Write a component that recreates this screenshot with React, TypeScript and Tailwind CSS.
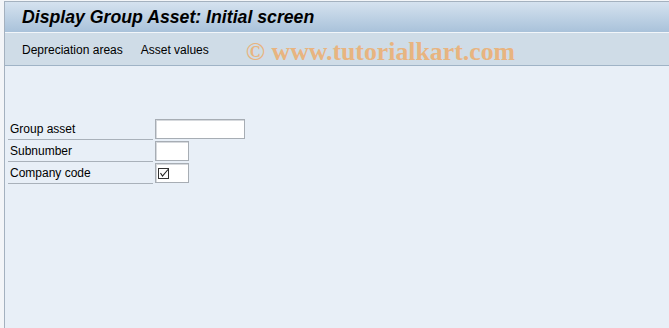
import React from 'react';

const Field = ({ label, width, children }: { label: string; width: string; children?: React.ReactNode }) => (
  <div className="flex items-end h-[22px]">
    <div className="w-[145px] h-[21px] border-b border-[#a9b1ba] pl-[2px] flex items-center text-[12px] text-black">
      {label}
    </div>
    <div
      className={`${width} h-[20px] ml-[2px] mb-[1px] bg-white border border-[#a7adb4] shadow-[inset_1px_1px_0_#d6d9dd] flex items-center`}
    >
      {children}
    </div>
  </div>
);

export default function App() {
  return (
    <div className="w-[669px] h-[328px] bg-[#f3f5f8] pl-[4px] pt-[1px] overflow-hidden font-['Liberation_Sans',Arial,sans-serif]">
      <div className="h-full border-l border-t border-[#a4b1bf] flex flex-col bg-[#e8eff7]">
        <div className="h-[31px] shrink-0 bg-gradient-to-b from-[#d5e2ef] to-[#a9c2da] border-b border-[#f2f6fa] flex items-center pl-[17px]">
          <span className="text-[17.7px] font-bold italic text-black">Display Group Asset: Initial screen</span>
        </div>
        <div className="h-[33px] shrink-0 bg-[#cfdce7] border-b border-[#9fb3c6] flex items-center pl-[17px] text-[12px] text-black">
          <span className="mt-[1px]">Depreciation areas</span>
          <span className="ml-[18px] mt-[1px]">Asset values</span>
          <span className="ml-[37px] mt-[5px] font-['Liberation_Serif',serif] font-bold text-[25.8px] leading-none text-[#e8b480]">
            © www.tutorialkart.com
          </span>
        </div>
        <div className="flex-1 pt-[52px] pl-[3px]">
          <Field label="Group asset" width="w-[90px]" />
          <Field label="Subnumber" width="w-[34px]" />
          <Field label="Company code" width="w-[34px]">
            <svg width="13" height="13" viewBox="0 0 13 13" className="ml-[1px]">
              <rect x="1.5" y="1.5" width="10" height="10" fill="none" stroke="#333" strokeWidth="1" />
              <path d="M3.5 6 L5.5 9 L11 2.5" fill="none" stroke="#222" strokeWidth="1.1" />
            </svg>
          </Field>
        </div>
      </div>
    </div>
  );
}
